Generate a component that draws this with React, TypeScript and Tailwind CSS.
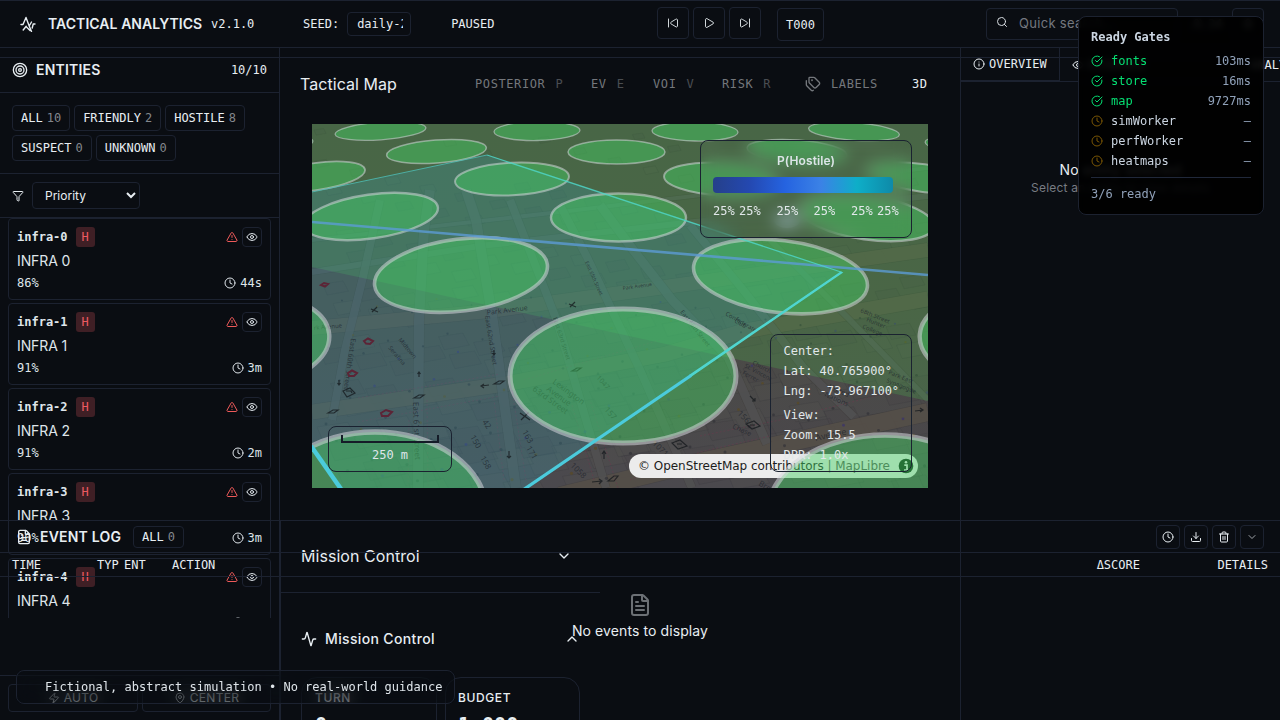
import React from "react";
import {
  Activity,
  ChevronDown,
  ChevronUp,
  CircleCheckBig,
  Clock,
  Download,
  Eye,
  FileText,
  Funnel,
  Info,
  MapPin,
  Play,
  Search,
  Settings,
  SkipBack,
  SkipForward,
  Tags,
  Target,
  Trash2,
  TriangleAlert,
  Users,
  Zap,
} from "lucide-react";

const mono = "font-['DejaVu_Sans_Mono',monospace]";
const box = "border border-[#1c2230] rounded";

const filters = [
  ["ALL", 10],
  ["FRIENDLY", 2],
  ["HOSTILE", 8],
  ["SUSPECT", 0],
  ["UNKNOWN", 0],
];

const entities = [
  ["86%", "44s"],
  ["91%", "3m"],
  ["91%", "2m"],
  ["90%", "3m"],
  ["88%", "2m"],
];

const gates: [string, string][] = [
  ["fonts", "103ms"],
  ["store", "16ms"],
  ["map", "9727ms"],
  ["simWorker", "—"],
  ["perfWorker", "—"],
  ["heatmaps", "—"],
];

// cx, cy, rx, ry, rotation, stroke width
const zones = [
  [380.5, 131, 45.5, 8.8, -4, 1.3],
  [537, 131, 43, 9.5, -1, 1.3],
  [695, 131.5, 43, 9.5, 1, 1.3],
  [854, 131.5, 45.5, 8.8, 4, 1.3],
  [267, 145, 46, 9, -5, 1.3],
  [971, 146, 46, 9, 5, 1.3],
  [436.5, 151.5, 50, 11.5, -4.3, 1.5],
  [616.5, 152, 48.5, 12, 0, 1.5],
  [797, 151.5, 50, 11.5, 4.3, 1.5],
  [316, 176.5, 49.5, 13.5, -8, 1.8],
  [512, 179, 57, 16.3, -2.8, 2],
  [721, 179, 57, 16.3, 2.8, 2],
  [923, 178, 57, 13.8, 8, 2],
  [371, 216.5, 67.5, 22, -8, 2.4],
  [618.5, 217.5, 67.5, 24, 0, 2.4],
  [867, 217.5, 67.5, 22, 8, 2.4],
  [461, 275, 87, 36, -7, 3.6],
  [780.5, 276.5, 87.500, 36, 7, 3.6],
  [250, 341, 79.5, 46, -5, 4.4],
  [623, 376, 113, 67, 0, 5],
  [999, 341, 79.5, 46, 5, 4.4],
  [375, 511, 111, 79, 0, 5.5],
  [885, 514, 117, 79, 0, 5.5],
];

const streets = [
  ["M312 328 L489 311 L665 287 L928 250", 14],
  ["M312 412 L505 384 L666 354 L744 331 L928 299", 15],
  ["M560 496 L700 462 L928 412", 18],
  ["M312 272 L480 246 L640 228 L928 196", 6],
  ["M312 240 L560 212 L928 168", 4],
  ["M332 420 L345 350 L363 277 L380 200", 8],
  ["M418 488 L419 320 L424 230 L430 190", 10],
  ["M516 488 L492 315 L476 220 L466 190", 10],
  ["M606 488 L557 321 L510 200", 8],
  ["M692 488 L640 370 L587 257 L560 205", 8],
  ["M767 444 L728 357 L673 301 L634 251 L600 205", 9],
  ["M854 417 L803 367 L744 291 L690 225", 8],
  ["M928 400 L850 320 L770 240", 6],
] as [string, number][];

const labels: [string, number, number, number, number][] = [
  ["East 60th Street", 351, 338, 98, 7],
  ["East 61st Street", 413, 402, 88, 8],
  ["East 62nd Street", 485, 316, 81, 6.5],
  ["East 63rd Street", 553, 318, 72, 6],
  ["Park Avenue", 487, 315, -7, 7],
  ["Park Avenue", 623, 290, -8, 5],
  ["rk Avenue", 314, 330, -5, 6],
  ["Lexington", 552, 383, 36, 8],
  ["Avenue", 546, 390, 36, 8],
  ["63rd Street", 532, 390, 36, 8],
  ["Avenue", 816, 441, -12, 9],
  ["Church", 752, 364, 28, 6],
  ["St. Vincent", 744, 367, 28, 6],
  ["Ferrer", 742, 374, 28, 6],
  ["68th Street", 860, 312, 22, 6],
  ["Hunter", 866, 321, 22, 6],
  ["College", 862, 328, 22, 6],
  ["Park East", 888, 374, 22, 6],
  ["Synagogue", 886, 382, 22, 6],
  ["United", 828, 388, 25, 7],
  ["Nations", 824, 396, 25, 7],
  ["Chase", 732, 428, 25, 7],
  ["1058", 570, 466, 45, 8],
  ["Bread", 758, 485, 30, 8],
  ["150", 470, 437, 60, 8],
  ["158", 480, 458, 60, 8],
  ["42", 482, 422, 55, 8],
  ["163", 522, 432, 60, 8],
  ["171", 526, 448, 60, 8],
  ["1071", 652, 444, 45, 8],
  ["156", 737, 414, 45, 8],
  ["1047", 596, 378, 48, 7],
  ["157", 604, 410, 48, 8],
  ["Serafina", 388, 348, 50, 6],
  ["Midtown", 398, 340, 50, 6],
  ["Confederate", 725, 315, 30, 6],
  ["Club", 734, 322, 30, 6],
  ["East 65th Street", 585, 262, 66, 5],
  ["East 66th Street", 680, 312, 52, 6],
];

// deterministic scatter for building footprints and points of interest
const specks = Array.from({ length: 230 }, (_, i) => {
  const t = ((i * 73) % 230) / 230;
  const y = 130 + 355 * Math.pow(t, 0.8);
  const x = 314 + ((i * 137.5) % 612);
  const s = 0.35 + (y - 124) / 364;
  return { x, y, s, k: i % 5 };
});

const skyPoly = "312,192 487,155 841,272 525,489 341,489 312,447";

function MapBase() {
  return (
    <svg viewBox="312 124 616 364" className="absolute inset-0 h-full w-full">
      <defs>
        <linearGradient id="ground" x1="0" y1="0" x2="0" y2="1">
          <stop offset="0" stopColor="#484a44" />
          <stop offset="0.5" stopColor="#4a4a44" />
          <stop offset="1" stopColor="#4b494e" />
        </linearGradient>
      </defs>
      <rect x="312" y="124" width="616" height="364" fill="url(#ground)" />
      {specks.map((p, i) => (
        <path
          key={i}
          d={`M${p.x} ${p.y}l${26 * p.s} ${-4 * p.s}l${7 * p.s} ${13 * p.s}l${-27 * p.s} ${5 * p.s}z`}
          fill={p.k % 2 ? "#56534e" : "#444147"}
          fillOpacity="0.2"
          stroke="#2b292c"
          strokeOpacity="0.25"
          strokeWidth="0.5"
        />
      ))}
      {streets.map(([d, w], i) => (
        <g key={i} fill="none">
          <path d={d} stroke="#3a3734" strokeOpacity="0.35" strokeWidth={w + 1} />
          <path d={d} stroke={i < 3 ? "#57514a" : "#525254"} strokeOpacity="0.8" strokeWidth={w} />
        </g>
      ))}
      <g fill="none" stroke="#6b3a4c" strokeOpacity="0.6" strokeWidth="0.9" strokeDasharray="2 2">
        <path d="M408 486L409 420M428 486L427 400M504 480L494 400M526 480L512 390M594 480L572 405M618 488L590 400" />
        <path d="M358 398L500 374M358 422L500 396M524 380L660 340M630 480L700 452L770 436M700 436L780 420L900 390" />
      </g>
      {specks
        .filter((p) => p.y > 300)
        .map((p, i) => (
          <circle
            key={i}
            cx={p.x + 9}
            cy={p.y - 3}
            r={1.2 * p.s}
            fill={p.k === 0 ? "#37306e" : p.k === 1 ? "#5a4a20" : "#303036"}
            fillOpacity="0.65"
          />
        ))}
      <polygon points="312,124 928,124 928,401 312,267" fill="#4ade50" fillOpacity="0.19" />
      <polygon points={skyPoly} fill="#38a8c0" fillOpacity="0.23" />
      {labels.map(([t, x, y, r, s], i) => (
        <text
          key={i}
          x={x}
          y={y}
          fontSize={s}
          transform={`rotate(${r} ${x} ${y})`}
          fill="#1a2029"
          fillOpacity="0.65"
          fontFamily="Noto Sans, sans-serif"
        >
          {t}
        </text>
      ))}
      <g fill="none" stroke="#5c2436" strokeWidth="2">
        <path d="M364 341l4-2.500 5 2.500-3 3-4-.5z" />
        <path d="M348 373l4-2.500 5 2.500-3 3-5 0z" />
        <path d="M381 413l5-3 6 2-4 4-6 0z" />
        <path d="M321 285l3-2 4 1-3 2.500z" />
      </g>
      <g fill="none" stroke="#14181c" strokeOpacity="0.75" strokeWidth="1.2">
        <path d="M343 391l7-3 5 5-8 4zM346 391l5 0 1 2" />
        <path d="M672 443l8-3 7 6-9 3zM677 444l5 0M746 424l8-3 6 5-8 3zM750 425l5 0" />
        <path d="M520 413l10 7M529 412l-8 8M371 309l7 3M377 307l-5 5M569 304l7 3M575 302l-5 5" />
        <path d="M419 377v-5m-1.500 2l1.500-2 1.500 2M339 380v5m-1.500-2l1.500 2 1.500-2M494 350v5m-1.500-2l1.500 2 1.500-2M509 451v7m-2-2l2 2 2-2M604 459v-8m-2 3l2-3 2 3" />
        <path d="M592 482l10-1m-3-2l3 2-3 3M489 385l-8 1m3-2l-3 2 3 2M915 411l8-1m-3-2l3 2-3 2M750 396l5 5m-3 0l3 0 0-3" />
        <path d="M328 413l5-3 5 0-4 3zM414 398l5-3 5 0-4 3zM494 384l5-3 5 0-4 3zM572 371l5-3 4 0-4 3zM608 481l6-5 4 0-4 5z" />
      </g>
    </svg>
  );
}

function MapZones() {
  return (
    <svg viewBox="312 124 616 364" className="absolute inset-0 h-full w-full">
      {zones.map(([cx, cy, rx, ry, a, w], i) => (
        <ellipse
          key={i}
          cx={cx}
          cy={cy}
          rx={rx}
          ry={ry}
          transform={`rotate(${a} ${cx} ${cy})`}
          fill="#44cf62"
          fillOpacity="0.46"
          stroke="#d4d6dc"
          strokeOpacity="0.54"
          strokeWidth={w}
        />
      ))}
      <path d="M312 222L928 275" stroke="#5b9bd5" strokeOpacity="0.8" strokeWidth="2.6" />
      <path d="M312 192L487 155" stroke="#4fc4bd" strokeOpacity="0.75" strokeWidth="1" />
      <path d="M487 155L841 272" stroke="#4fd5c5" strokeOpacity="0.85" strokeWidth="1.3" />
      <path d="M841 272L690 375.200L691 376.200L842 272.500Z" fill="#4fd5cf" stroke="#4fd5cf" strokeWidth="1.3" />
      <path d="M691 375.500L523 490" stroke="#4bcbdc" strokeWidth="3.200" />
      <path d="M311 446L341 489" stroke="#4bcbdc" strokeWidth="4.500" />
      <ellipse cx="787" cy="220" rx="13" ry="8" fill="#a8c4d4" fillOpacity="0.6" />
    </svg>
  );
}

function TacticalMap() {
  const panel = "absolute rounded-lg border border-[#1a2230]";
  return (
    <div className="relative h-[364px] w-[616px] overflow-hidden">
      <MapBase />
      <div className="absolute right-[10px] bottom-[10px] flex h-6 w-[289px] items-center justify-between rounded-full bg-[#ececec] pr-1 pl-[9px] font-['DejaVu_Sans',sans-serif] text-xs text-[#1c1c1c]">
        <span className="whitespace-nowrap tracking-[-0.03px]">
          © OpenStreetMap contributors <span className="text-[#555]">| MapLibre</span>
        </span>
        <svg viewBox="0 0 16 16" className="h-4 w-4">
          <circle cx="8" cy="8" r="7.300" fill="#0c2212" />
          <circle cx="8" cy="4.300" r="1.300" fill="#ececec" />
          <path d="M6.300 7.200H9v5M6 12h4.200" stroke="#ececec" strokeWidth="1.700" fill="none" />
        </svg>
      </div>
      <MapZones />
      <div className={`${panel} top-4 right-4 flex h-[98px] w-[212px] flex-col px-3 pt-3 backdrop-blur-sm`}>
        <div className="text-center text-xs leading-4 font-semibold tracking-[0.1px] text-[#dde5e8]">P(Hostile)</div>
        <div className="mt-2 h-4 w-[180px] rounded bg-[linear-gradient(90deg,#25408a_0%,#2448b0_20%,#2563e0_40%,#3b82e6_60%,#0eaec8_80%,#0e8aa8_100%)]" />
        <div className={`${mono} mt-2.5 flex h-4 text-xs leading-4 whitespace-nowrap text-[#e2e8ea]`}>
          <span className="w-[26px] shrink-0">25%</span>
          <span className="w-[37.500px] shrink-0">25%</span>
          <span className="w-[37px] shrink-0">25%</span>
          <span className="w-[37.500px] shrink-0">25%</span>
          <span className="w-[26px] shrink-0">25%</span>
          <span>25%</span>
        </div>
      </div>
      <div className={`${panel} bottom-4 left-4 flex h-[46px] w-[124px] flex-col items-center rounded-[4px] pt-2`}>
        <div className="h-2 w-[98px] border-2 border-t-0 border-[#151c28]" />
        <div className={`${mono} mt-1 text-xs leading-4 text-[#dfe5ea]`}>250 m</div>
      </div>
      <div className={`${panel} ${mono} right-4 bottom-4 h-[138px] w-[142px] rounded-[4px] pt-1.5 pl-[12.500px] text-xs leading-5 whitespace-pre text-[#e2e8ea]`}>
        <div>Center:</div>
        <div>Lat: 40.765900°</div>
        <div>Lng: -73.967100°</div>
        <div className="mt-1">View:</div>
        <div>Zoom: 15.5</div>
        <div>DPR: 1.0x</div>
      </div>
    </div>
  );
}

function LogoIcon() {
  return (
    <svg viewBox="0 0 16 16" className="h-4 w-4" fill="none" stroke="currentColor" strokeWidth="1.400" strokeLinecap="round" strokeLinejoin="round">
      <path d="M1 8.500h2L6 1.500l3.200 8.500M3.200 14l3-3.800M9.200 10L11.500 6l0 0M9.200 10l2.300 5.500M12.200 12l1-4H15M6.500 11l3.500 3.500" />
    </svg>
  );
}

function Header() {
  const btn = `${box} flex h-8 w-8 items-center justify-center`;
  return (
    <header className="flex h-12 shrink-0 items-center border-y border-[#1c2230] text-[#e8eef2]">
      <div className="flex w-[303px] items-center pl-5">
        <LogoIcon />
        <span className="ml-3 w-[163px] text-sm font-semibold tracking-[0.05px] whitespace-nowrap">TACTICAL ANALYTICS</span>
        <span className={`${mono} text-xs`}>v2.1.0</span>
      </div>
      <div className={`${mono} flex w-[354px] items-center text-xs`}>
        <span>SEED:</span>
        <div className={`${box} ml-2 flex h-6 w-16 items-center pr-[7px] pl-[9px]`}>
          <span className="overflow-hidden whitespace-nowrap">daily-2024</span>
        </div>
        <span className="ml-10">PAUSED</span>
      </div>
      <div className="flex w-[329px] items-center gap-1">
        <div className={`${btn} -mt-0.5`}><SkipBack size={12} strokeWidth={1.8} /></div>
        <div className={`${btn} -mt-0.5`}><Play size={12} strokeWidth={1.8} /></div>
        <div className={`${btn} -mt-0.5`}><SkipForward size={12} strokeWidth={1.8} /></div>
        <div className={`${box} ${mono} ml-3 flex h-[33px] w-[47px] items-center justify-center pt-0.5 text-xs`}>T000</div>
      </div>
      <div className={`${box} flex h-8 w-48 items-center text-[13px] tracking-[0.3px] text-[#74787f]`}>
        <Search size={12} className="-mt-1 ml-[9px] text-[#d8dde2]" />
        <span className="ml-[11px]">Quick search...</span>
      </div>
      <div className={`${mono} ml-3.5 flex w-10 items-center gap-1 text-xs`}>
        <Users size={12} />
        24
      </div>
      <div className={btn}><Settings size={12} /></div>
    </header>
  );
}

function EntityCard({ index, p, age }: { index: number; p: string; age: string }) {
  return (
    <div className="flex h-[82px] shrink-0 flex-col gap-1 rounded border border-[#1c2230] p-2 text-[#dfe5ea]">
      <div className={`${mono} flex h-5 items-center text-xs`}>
        <span className="font-bold">infra-{index}</span>
        <span className="ml-2 flex h-5 w-[19px] items-center justify-center rounded-[3px] bg-[#3f1f25] text-[#ee5a62]">H</span>
        <TriangleAlert size={12} className="ml-auto text-[#ee5a5a]" />
        <span className={`${box} ml-1 flex h-5 w-5 items-center justify-center`}><Eye size={12} /></span>
      </div>
      <div className="text-sm leading-5 tracking-[-0.1px]">INFRA {index}</div>
      <div className={`${mono} flex h-4 items-center text-xs`}>
        {p}
        <span className="ml-auto flex items-center gap-1"><Clock size={12} />{age}</span>
      </div>
    </div>
  );
}

function EntityPanel() {
  return (
    <aside className="flex w-[280px] shrink-0 flex-col border-r border-[#1c2230]">
      <div className="flex h-[45px] shrink-0 items-center border-b border-[#1c2230] px-3">
        <Target size={16} />
        <span className="ml-2 text-sm font-semibold tracking-[0.2px]">ENTITIES</span>
        <span className={`${mono} ml-auto text-xs`}>10/10</span>
      </div>
      <div className="flex h-[81px] shrink-0 flex-wrap content-start gap-1 border-b border-[#1c2230] p-3">
        {filters.map(([name, n]) => (
          <span key={name} className={`${box} ${mono} flex h-[26px] items-center gap-1 px-2 text-xs`}>
            {name}
            <span className="text-[#83878d]">{n}</span>
          </span>
        ))}
      </div>
      <div className="flex h-11 shrink-0 items-center gap-2 border-b border-[#1c2230] px-3">
        <Funnel size={12} />
        <select className="h-[27px] w-[108px] rounded border border-[#1c2230] bg-[#0a0d12] px-2 text-xs">
          <option>Priority</option>
        </select>
      </div>
      <div className="flex h-[400px] shrink-0 flex-col gap-[3px] overflow-hidden px-2">
        {entities.map(([p, age], i) => (
          <EntityCard key={i} index={i} p={p} age={age} />
        ))}
      </div>
      <div className="mt-auto flex h-[45px] shrink-0 gap-1 border-t border-[#1c2230] px-2 pt-2 text-xs tracking-[0.3px] text-[#e0e6ea]">
        <div className={`${box} flex h-7 w-[130px] items-center justify-center gap-1`}><Zap size={12} />AUTO</div>
        <div className={`${box} flex h-7 flex-1 items-center justify-center gap-1`}><MapPin size={12} />CENTER</div>
      </div>
    </aside>
  );
}

function LayerToggle({ name, k, className }: { name: string; k: string; className: string }) {
  return (
    <span className={`flex gap-[10px] ${className}`}>
      <span>{name}</span>
      <span className="text-[#4a4d52]">{k}</span>
    </span>
  );
}

function Center() {
  return (
    <main className="flex w-[680px] shrink-0 flex-col">
      <div className="flex h-[472px] shrink-0 flex-col">
        <div className="mt-6 flex h-6 items-center pl-5">
          <span className="w-[175px] text-base tracking-[0.05px]">Tactical Map</span>
          <div className={`${mono} flex items-center text-xs tracking-[0.6px] text-[#74777c]`}>
            <LayerToggle name="POSTERIOR" k="P" className="w-[116px]" />
            <LayerToggle name="EV" k="E" className="w-[62px]" />
            <LayerToggle name="VOI" k="V" className="w-[69px]" />
            <LayerToggle name="RISK" k="R" className="w-[83px]" />
            <Tags size={16} />
            <span className="ml-[10px] w-[81px]">LABELS</span>
            <span className="text-[#e8eef2]">3D</span>
          </div>
        </div>
        <div className="mt-7 pl-8">
          <TacticalMap />
        </div>
      </div>
      <section className="flex-1 overflow-hidden border-l border-[#1c2230]">
        <div className="flex h-[73px] w-[319px] items-center justify-between border-b border-[#1c2230] pr-7 pl-5">
          <span className="text-base tracking-[0.05px]">Mission Control</span>
          <ChevronDown size={16} />
        </div>
        <div className="flex h-[84px] w-[319px] items-center pt-2 pr-5 pl-5">
          <Activity size={16} />
          <span className="ml-2 text-sm font-medium tracking-[0.35px]">Mission Control</span>
          <ChevronUp size={16} className="ml-auto" />
        </div>
        <div className="flex gap-2 pl-5">
          <div className="h-24 w-[136px] rounded-2xl border border-[#1c2230] px-[13px] pt-3">
            <div className="text-xs leading-4 font-medium tracking-[0.6px]">TURN</div>
            <div className={`${mono} mt-1 text-xl font-bold`}>0</div>
          </div>
          <div className="h-24 w-[135px] rounded-2xl border border-[#1c2230] px-3 pt-3">
            <div className="text-xs leading-4 font-medium tracking-[0.6px]">BUDGET</div>
            <div className={`${mono} mt-1 text-xl font-bold`}>1,000</div>
          </div>
        </div>
      </section>
    </main>
  );
}

function DetailPanel() {
  return (
    <aside className="flex w-[320px] shrink-0 flex-col overflow-hidden border-l border-[#1c2230]">
      <div className={`${mono} flex h-[34px] shrink-0 text-xs`}>
        <div className="flex w-[99px] shrink-0 items-center gap-1 border-r border-b-2 border-[#1c2230] pl-3">
          <Info size={12} />OVERVIEW
        </div>
        <div className="flex w-[180px] shrink-0 items-center gap-1 border-b border-[#1c2230] pt-px pl-3">
          <Eye size={12} />EVIDENCE
        </div>
        <div className="flex flex-1 items-center border-b border-[#1c2230] pt-px pl-[10px]">ANALYSIS</div>
      </div>
      <div className="mt-[78px] text-center">
        <div className="text-sm leading-5 tracking-[0.1px] text-[#e8eef2]">No entity selected</div>
        <div className="text-xs leading-4 tracking-[0.2px] text-[#777b82]">Select an entity to view details</div>
      </div>
    </aside>
  );
}

function EventLog() {
  const btn = `${box} flex h-6 w-6 items-center justify-center`;
  return (
    <section className="absolute inset-x-0 bottom-0 h-[200px] border-t border-[#1c2230]">
      <div className="flex h-8 items-center border-b border-[#1c2230] px-4">
        <FileText size={16} />
        <span className="ml-2 w-[81px] text-sm font-semibold tracking-[0.2px] whitespace-nowrap">EVENT LOG</span>
        <span className={`${box} ${mono} ml-3 flex h-[22px] items-center gap-1 px-2 text-xs`}>
          ALL<span className="text-[#83878d]">0</span>
        </span>
        <div className="ml-auto flex gap-1">
          <span className={btn}><Clock size={12} /></span>
          <span className={btn}><Download size={12} /></span>
          <span className={btn}><Trash2 size={12} /></span>
          <span className={btn}><ChevronDown size={12} className="text-[#a0a5aa]" /></span>
        </div>
      </div>
      <div className={`${mono} flex h-6 items-center border-b border-[#1c2230] px-3 text-xs`}>
        <span className="w-[85px]">TIME</span>
        <span className="w-[27px]">TYP</span>
        <span className="w-[48px]">ENT</span>
        <span>ACTION</span>
        <span className="ml-auto">ΔSCORE</span>
        <span className="w-32 text-right">DETAILS</span>
      </div>
      <div className="mt-4 flex flex-col items-center">
        <FileText size={24} className="text-[#6c7075]" />
        <span className="mt-1 text-sm leading-5 tracking-[0.1px]">No events to display</span>
      </div>
    </section>
  );
}

function ReadyGates() {
  return (
    <div className={`${mono} absolute top-4 right-4 h-[199px] w-[186px] rounded-lg border border-[#1c2230] bg-black/90 px-3 pt-3 text-xs backdrop-blur-[3px]`}>
      <div className="h-[22px] leading-4 font-bold text-[#cbd5e1]">Ready Gates</div>
      {gates.map(([name, value], i) => (
        <div key={name} className="flex h-5 items-center">
          {i < 3 ? <CircleCheckBig size={12} className="text-[#05df72]" /> : <Clock size={12} className="text-[#7a5605]" />}
          <span className={i < 3 ? "ml-2 text-[#05df72]" : "ml-2 text-[#cbd5e1]"}>{name}</span>
          <span className="ml-auto text-[#90a1b9]">{value}</span>
        </div>
      ))}
      <div className="mt-1.5 border-t border-[#20283a] pt-2 leading-4 text-[#90a1b9]">3/6 ready</div>
    </div>
  );
}

function Disclaimer() {
  return (
    <div className="absolute bottom-4 left-4 h-[34px] w-[439px]">
      <div className="absolute inset-0 rounded-lg bg-[#0a0d12]/60 opacity-65 backdrop-blur-sm" />
      <div className={`${mono} relative flex h-full items-center rounded-lg border border-[#1c2230] pl-7 text-xs whitespace-nowrap text-[#dfe5ea]`}>
        Fictional, abstract simulation • No real-world guidance
      </div>
    </div>
  );
}

export default function App() {
  return (
    <div className="relative flex h-[720px] w-[1280px] flex-col overflow-hidden bg-[#0a0d12] font-['Inter',sans-serif] text-[#e8eef2]">
      <Header />
      <div className="flex min-h-0 flex-1">
        <EntityPanel />
        <Center />
        <DetailPanel />
      </div>
      <div className="absolute inset-x-0 top-[57px] h-px bg-[#1c2230]" />
      <EventLog />
      <Disclaimer />
      <ReadyGates />
    </div>
  );
}
